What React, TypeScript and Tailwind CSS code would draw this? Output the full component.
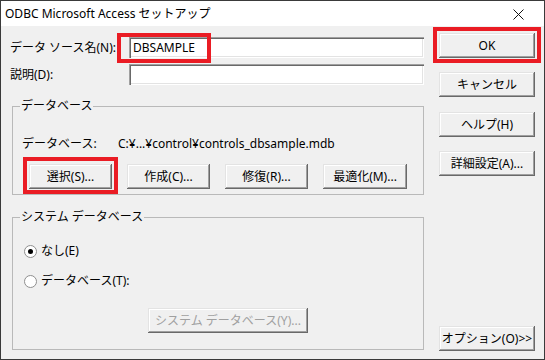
import React, { PropsWithChildren } from "react"
import cx from "clsx"

const FONT = "font-['Noto_Sans','Noto_Sans_CJK_JP',sans-serif]"

// 3D raised button, classic dialog look
function Btn({
  children,
  className,
  disabled
}: PropsWithChildren<{ className?: string; disabled?: boolean }>) {
  return (
    <button
      type="button"
      className={cx(
        "flex h-[25px] items-center justify-center bg-[#f0f0f0] text-[12px] leading-[16px] shadow-[inset_-1px_-1px_#696969,inset_1px_1px_#e3e3e3,inset_-2px_-2px_#a0a0a0,inset_2px_2px_#ffffff]",
        disabled ? "text-[#a0a0a0]" : "text-black",
        className
      )}
    >
      {children}
    </button>
  )
}

function RedBox({ className }: { className: string }) {
  return (
    <span
      className={cx(
        "pointer-events-none absolute border-[4px] border-[#ea1c24]",
        className
      )}
    />
  )
}

function Field({ value }: { value?: string }) {
  return (
    <div className="flex h-[21px] w-[295px] items-center bg-white pl-[4px] text-[12px] shadow-[inset_1px_1px_#a0a0a0,inset_2px_2px_#696969,inset_-1px_-1px_#ffffff,inset_-2px_-2px_#e3e3e3]">
      {value}
    </div>
  )
}

function Radio({ checked, label }: { checked?: boolean; label: string }) {
  return (
    <div className="flex h-[16px] items-center">
      <span className="ml-[11px] flex h-[13px] w-[13px] items-center justify-center rounded-full border border-[#8f8f8f] bg-white">
        {checked && <span className="h-[5px] w-[5px] rounded-full bg-black" />}
      </span>
      <span className="ml-[4px]">{label}</span>
    </div>
  )
}

function Group({ title, children }: PropsWithChildren<{ title: string }>) {
  return (
    <fieldset className="ml-[2px] w-[412px] border border-[#b9b9b9]">
      <legend className="ml-[7px] h-[16px] px-[1px] leading-[16px]">{title}</legend>
      {children}
    </fieldset>
  )
}

export default function App() {
  return (
    <div
      className={cx(
        "flex h-[360px] w-[545px] flex-col border border-[#3a3a3a] text-[12px] leading-[16px] text-black",
        FONT
      )}
    >
      {/* Title bar */}
      <div className="flex h-[25px] shrink-0 items-center bg-white pl-[4px] pr-[20px]">
        <span className="flex-1">ODBC Microsoft Access セットアップ</span>
        <svg width="11" height="11" viewBox="0 0 11 11" className="mt-[1px]">
          <path d="M0.5 0.5 L10.5 10.5 M10.5 0.5 L0.5 10.5" stroke="#111" strokeWidth="1" />
        </svg>
      </div>

      {/* Body */}
      <div className="flex flex-1 bg-[#f0f0f0]">
        <div className="ml-[9px] w-[415px] pt-[11px]">
          <div className="flex h-[21px] items-center">
            <span className="w-[119px]">データ ソース名(N):</span>
            <div className="relative">
              <Field value="DBSAMPLE" />
              <RedBox className="-left-[12px] -top-[4px] h-[30px] w-[94px]" />
            </div>
          </div>
          <div className="mt-[6px] flex h-[21px] items-center">
            <span className="w-[119px]">説明(D):</span>
            <Field />
          </div>

          <div className="mt-[13px]">
            <Group title="データベース">
              <div className="mt-[22px] flex h-[16px] items-center pl-[9px]">
                <span className="w-[96px]">データベース:</span>
                <span>C:¥...¥control¥controls_dbsample.mdb</span>
              </div>
              <div className="mb-[5px] ml-[16px] mt-[12px] flex gap-[15px]">
                <div className="relative">
                  <Btn className="w-[83px]">選択(S)...</Btn>
                  <RedBox className="-bottom-[5px] -left-[6px] -right-[6px] -top-[7px]" />
                </div>
                <Btn className="w-[83px]">作成(C)...</Btn>
                <Btn className="w-[83px]">修復(R)...</Btn>
                <Btn className="w-[84px]">最適化(M)...</Btn>
              </div>
            </Group>
          </div>

          <div className="mt-[14px]">
            <Group title="システム データベース">
              <div className="mt-[18px]">
                <Radio checked label="なし(E)" />
              </div>
              <div className="mt-[14px]">
                <Radio label="データベース(T):" />
              </div>
              <div className="mb-[16px] ml-[135px] mt-[19px]">
                <Btn disabled className="w-[160px]">
                  システム データベース(Y)...
                </Btn>
              </div>
            </Group>
          </div>
        </div>

        <div className="ml-[14px] flex w-[96px] flex-col pb-[8px] pt-[7px]">
          <div className="relative">
            <Btn className="w-[96px]">OK</Btn>
            <RedBox className="-bottom-[5px] -left-[6px] -right-[6px] -top-[6px]" />
          </div>
          <Btn className="mt-[14px] w-[96px]">キャンセル</Btn>
          <Btn className="mt-[15px] w-[96px]">ヘルプ(H)</Btn>
          <Btn className="mt-[14px] w-[96px]">詳細設定(A)...</Btn>
          <Btn className="mt-auto w-[96px]">オプション(O)&gt;&gt;</Btn>
        </div>
      </div>
    </div>
  )
}
